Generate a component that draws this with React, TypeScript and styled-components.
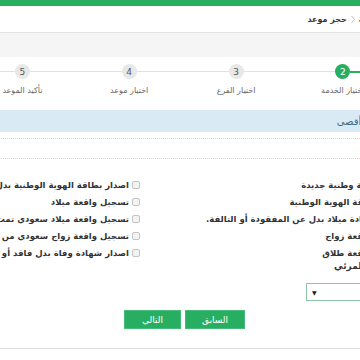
import styled, { createGlobalStyle } from "styled-components";

const GlobalStyle = createGlobalStyle`
	html, body {
		margin: 0;
		padding: 0;
		background: #fff;
	}
	body {
		width: 360px;
		height: 360px;
		overflow: hidden;
		font-family: "DejaVu Sans", "Noto Sans", sans-serif;
	}
`;

const Viewport = styled.div`
	width: 360px;
	height: 360px;
	overflow: hidden;
`;
const Page = styled.div`
	direction: rtl;
	width: 534px;
	margin-left: -31px;
`;

const TopNav = styled.nav`
	display: flex;
	height: 6px;
	overflow: hidden;
`;
const NavPart = styled.div<{ $grey?: boolean }>`
	display: flex;
	gap: 24px;
	padding: 0 14px;
	box-sizing: border-box;
	background: ${(p) => (p.$grey ? "#a6a6a6" : "#27ae60")};
	${(p) => (p.$grey ? "width: 203px;" : "flex: 1;")}
`;
const NavItem = styled.span`
	color: #fff;
	font-size: 10px;
	line-height: 12px;
	margin-top: -11px;
	white-space: nowrap;
`;

const Crumbs = styled.div`
	height: 26px;
	margin-right: 111px;
	display: flex;
	align-items: center;
	gap: 3px;
	font-size: 8px;
	font-weight: bold;
	color: #333;
`;
const Chevron = styled.svg`
	width: 6px;
	height: 9px;
`;

const Band = styled.div`
	height: 24px;
	background: #f5f5f5;
	border-top: 1px solid #e3e3e3;
`;

const Steps = styled.ol`
	list-style: none;
	margin: 0;
	padding: 7px 0 0;
	display: grid;
	grid-template-columns: repeat(5, 1fr);
`;
const Step = styled.li`
	display: flex;
	flex-direction: column;
	align-items: center;
`;
const Track = styled.div`
	width: 100%;
	display: flex;
	align-items: center;
`;
const Rail = styled.span<{ $done: boolean }>`
	flex: 1;
	height: ${(p) => (p.$done ? 2 : 1)}px;
	background: ${(p) => (p.$done ? "#27ae60" : "#e2e2e2")};
`;
const Dot = styled.span<{ $done: boolean }>`
	width: 15px;
	height: 15px;
	border-radius: 50%;
	display: flex;
	align-items: center;
	justify-content: center;
	font-size: 9px;
	background: ${(p) => (p.$done ? "#27ae60" : "#e8e8e8")};
	color: ${(p) => (p.$done ? "#fff" : "#555")};
`;
const StepLabel = styled.span`
	margin-top: 6px;
	font-size: 8px;
	line-height: 12px;
	color: #666;
	white-space: nowrap;
`;

const Content = styled.div`
	margin: 13px 111px 0 8px;
`;
const InfoBar = styled.div`
	height: 22px;
	padding-right: 13px;
	display: flex;
	align-items: center;
	background: #d9eaf5;
	color: #31708f;
	font-size: 10px;
`;
const Dotted = styled.div`
	margin-top: 6px;
	height: 19px;
	border-top: 1px dotted #efcaca;
	border-bottom: 1px dotted #efcaca;
`;
const Services = styled.div`
	margin: 17px -22px 0 0;
	display: grid;
	grid-template-columns: 274px 1fr;
	grid-template-rows: repeat(5, 17px);
	grid-auto-flow: column;
`;
const Service = styled.label`
	display: flex;
	align-items: center;
	gap: 3px;
	font-size: 8.5px;
	font-weight: bold;
	color: #333;
	white-space: nowrap;
`;
const Box = styled.span`
	flex: none;
	box-sizing: border-box;
	width: 8px;
	height: 8px;
	border: 1px solid #c4c4c4;
	border-radius: 2px;
	background: #f3f3f3;
`;

const FieldLabel = styled.div`
	margin-right: -9px;
	font-size: 9px;
	font-weight: bold;
	line-height: 10px;
	color: #333;
`;
const SelectBox = styled.div`
	margin-top: 12px;
	width: 86px;
	height: 18px;
	box-sizing: border-box;
	border: 1px solid #8fc4a5;
	display: flex;
	align-items: center;
	justify-content: flex-end;
	padding-left: 5px;
	font-size: 6px;
	color: #222;
`;

const Actions = styled.div`
	margin-top: 9px;
	display: flex;
	justify-content: center;
	gap: 4px;
`;
const Button = styled.button<{ $w: number }>`
	width: ${(p) => p.$w}px;
	height: 19px;
	padding: 0;
	border: 1px solid #48bd7b;
	background: #27ae60;
	color: #fff;
	font-family: inherit;
	font-size: 9px;
`;
const Footer = styled.div`
	margin-top: 19px;
	border-top: 1px solid #dedede;
`;

const nav = ["الرئيسية", "الخدمات", "الاستعلامات", "المواعيد", "عن الوزارة", "الأخبار", "اتصل بنا"];
const steps = ["اختيار القطاع", "اختيار الخدمة", "اختيار الفرع", "اختيار موعد", "تأكيد الموعد"];
const current = 2;
const services = [
	"إصدار هوية وطنية جديدة",
	"تجديد بطاقة الهوية الوطنية",
	"إصدار شهادة ميلاد بدل عن المفقودة أو التالفة.",
	"تسجيل واقعة زواج",
	"تسجيل واقعة طلاق",
	"اصدار بطاقة الهوية الوطنية بدل تالف",
	"تسجيل واقعة ميلاد",
	"تسجيل واقعة ميلاد سعودي تمت خارج المملكة",
	"تسجيل واقعة زواج سعودي من أجنبية",
	"اصدار شهادة وفاة بدل فاقد أو تالف",
];

export default function App() {
	return (
		<Viewport>
			<GlobalStyle />
			<Page>
				<TopNav>
					<NavPart $grey>
						<NavItem>دخول</NavItem>
						<NavItem>English</NavItem>
					</NavPart>
					<NavPart>
						{nav.map((n) => (
							<NavItem key={n}>{n}</NavItem>
						))}
					</NavPart>
				</TopNav>
				<Crumbs>
					<span>الرئيسية</span>
					<Chevron viewBox="0 0 6 9">
						<path d="M1.5 1 4.5 4.5 1.5 8" fill="none" stroke="#bbb" strokeWidth="1" />
					</Chevron>
					<span>حجز موعد</span>
				</Crumbs>
				<Band />
				<Steps>
					{steps.map((s, i) => (
						<Step key={s}>
							<Track>
								<Rail $done={i + 1 <= current} />
								<Dot $done={i + 1 <= current}>{i + 1}</Dot>
								<Rail $done={i + 1 < current} />
							</Track>
							<StepLabel>{s}</StepLabel>
						</Step>
					))}
				</Steps>
				<Content>
					<InfoBar>بحد أقصى</InfoBar>
					<Dotted />
					<Services>
						{services.map((s) => (
							<Service key={s}>
								<Box />
								{s}
							</Service>
						))}
					</Services>
					<FieldLabel>الاتصال المرئي</FieldLabel>
					<SelectBox>▼</SelectBox>
					<Actions>
						<Button $w={60}>السابق</Button>
						<Button $w={57}>التالي</Button>
					</Actions>
					<Footer />
				</Content>
			</Page>
		</Viewport>
	);
}
